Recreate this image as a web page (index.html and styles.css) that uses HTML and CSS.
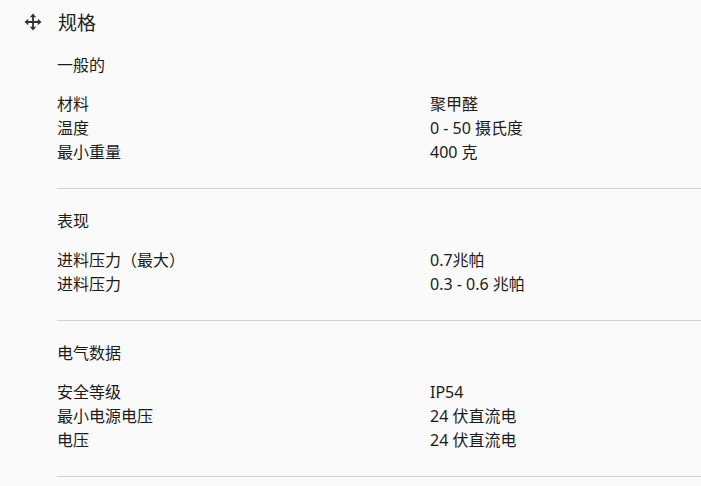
FILE: index.html
```html
<!DOCTYPE html>
<html lang="zh">
<head>
<meta charset="utf-8">
<link rel="stylesheet" href="styles.css">
</head>
<body>
<div class="panel">
  <div class="header">
    <svg class="move-icon" width="18" height="18" viewBox="0 0 18 18" aria-hidden="true">
      <path d="M9 3.5V14.5M3.5 9H14.5" stroke="#333" stroke-width="1.8" fill="none"/>
      <polygon points="9,0.5 12.2,4.2 5.8,4.2" fill="#333"/>
      <polygon points="9,17.5 12.2,13.8 5.8,13.8" fill="#333"/>
      <polygon points="0.5,9 4.2,5.8 4.2,12.2" fill="#333"/>
      <polygon points="17.5,9 13.8,5.8 13.8,12.2" fill="#333"/>
    </svg>
    <span class="title">规格</span>
  </div>

  <div class="section">
    <div class="section-title">一般的</div>
    <div class="rows">
      <div class="label">材料</div><div class="value">聚甲醛</div>
      <div class="label">温度</div><div class="value">0 - 50 摄氏度</div>
      <div class="label">最小重量</div><div class="value">400 克</div>
    </div>
  </div>

  <div class="section">
    <div class="section-title">表现</div>
    <div class="rows">
      <div class="label">进料压力（最大）</div><div class="value">0.7兆帕</div>
      <div class="label">进料压力</div><div class="value">0.3 - 0.6 兆帕</div>
    </div>
  </div>

  <div class="section">
    <div class="section-title">电气数据</div>
    <div class="rows">
      <div class="label">安全等级</div><div class="value">IP54</div>
      <div class="label">最小电源电压</div><div class="value">24 伏直流电</div>
      <div class="label">电压</div><div class="value">24 伏直流电</div>
    </div>
  </div>
</div>
</body>
</html>
```
FILE: styles.css
```css
html, body {
  margin: 0;
  padding: 0;
  background: #fafafa;
}
body {
  font-family: "Noto Sans", "Noto Sans CJK SC", sans-serif;
  color: #1b1b1b;
  font-size: 16px;
}
.panel {
  width: 701px;
}
.header {
  display: flex;
  align-items: center;
  height: 20px;
  padding-top: 12px;
  padding-bottom: 1px;
  padding-left: 24px;
}
.move-icon {
  flex: none;
  margin-right: 16px;
}
.title {
  font-family: "Noto Sans CJK SC", sans-serif;
  font-size: 19px;
  line-height: 20px;
  color: #222;
}
.section {
  margin-left: 57px;
  padding-top: 20px;
  padding-bottom: 24px;
  border-bottom: 1px solid #d3d3d3;
}
.section-title {
  line-height: 24px;
  margin-bottom: 15px;
}
.rows {
  display: grid;
  grid-template-columns: 373px 1fr;
  line-height: 24px;
}
```
